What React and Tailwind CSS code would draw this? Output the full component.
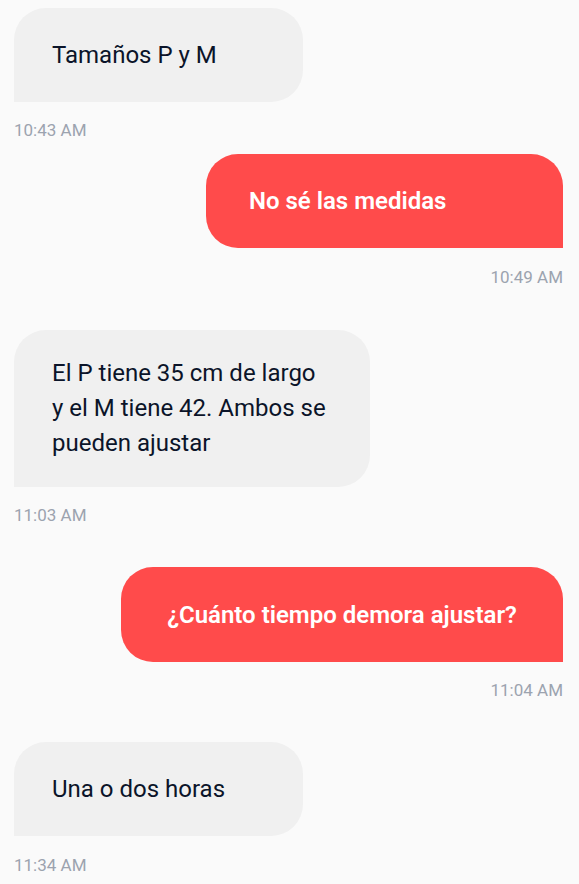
export default function App() {
  const font = { fontFamily: "Roboto, 'Noto Sans', sans-serif" };
  return (
    <div className="min-h-[884px] w-[579px] bg-[#fafafa] pl-[14px] pr-[16px] pt-[8px] pb-[8px] flex flex-col" style={font}>
      {/* msg 1 */}
      <div className="w-[289px] h-[94px] rounded-[32px] rounded-bl-none bg-[#f0f0f0] pl-[38px] flex items-center text-[24px] text-[#0b1429]">
        Tamaños P y M
      </div>
      <div className="mt-[18px] text-[17px] leading-[20px] text-[#9ca3af]">10:43 AM</div>

      {/* msg 2 */}
      <div className="mt-[14px] self-end w-[357px] h-[94px] rounded-[32px] rounded-br-none bg-[#ff4b4b] pl-[43px] flex items-center text-[24px] font-semibold text-white">
        No sé las medidas
      </div>
      <div className="mt-[19px] self-end text-[17px] leading-[20px] text-[#9ca3af]">10:49 AM</div>

      {/* msg 3 */}
      <div className="mt-[43px] w-[356px] h-[157px] rounded-[32px] rounded-bl-none bg-[#f0f0f0] pl-[38px] pr-[20px] flex items-center text-[24px] leading-[35px] text-[#0b1429]">
        <p>El P tiene 35 cm de largo<br />y el M tiene 42. Ambos se<br />pueden ajustar</p>
      </div>
      <div className="mt-[18px] text-[17px] leading-[20px] text-[#9ca3af]">11:03 AM</div>

      {/* msg 4 */}
      <div className="mt-[42px] self-end w-[442px] h-[95px] rounded-[32px] rounded-br-none bg-[#ff4b4b] flex items-center justify-center text-[24px] font-semibold text-white">
        ¿Cuánto tiempo demora ajustar?
      </div>
      <div className="mt-[18px] self-end text-[17px] leading-[20px] text-[#9ca3af]">11:04 AM</div>

      {/* msg 5 */}
      <div className="mt-[42px] w-[289px] h-[94px] rounded-[32px] rounded-bl-none bg-[#f0f0f0] pl-[38px] flex items-center text-[24px] text-[#0b1429]">
        Una o dos horas
      </div>
      <div className="mt-[19px] text-[17px] leading-[20px] text-[#9ca3af]">11:34 AM</div>
    </div>
  );
}
